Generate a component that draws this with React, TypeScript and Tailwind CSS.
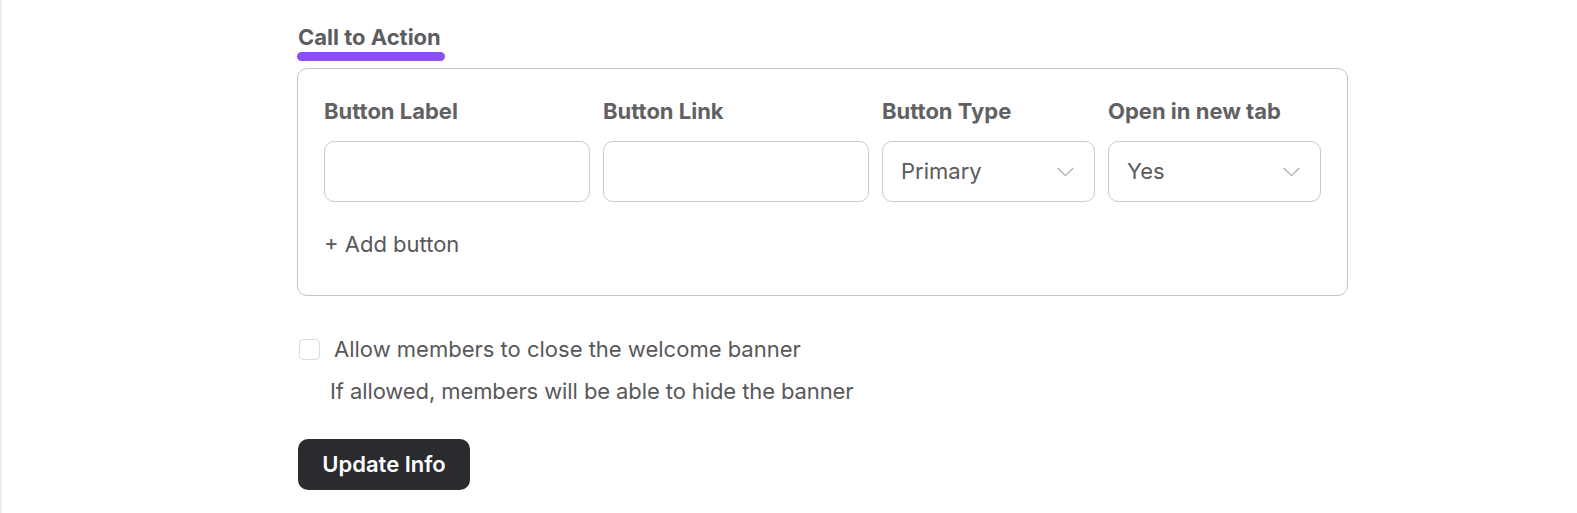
const FIELDS = [
  { label: "Button Label", kind: "input", width: "w-[266px]" },
  { label: "Button Link", kind: "input", width: "w-[266px]" },
  { label: "Button Type", kind: "select", width: "w-[213px]", value: "Primary" },
  { label: "Open in new tab", kind: "select", width: "w-[213px]", value: "Yes" },
];

function Chevron() {
  return (
    <svg width="17" height="10" viewBox="0 0 17 10" fill="none" className="text-[#acacae]">
      <path d="M1 1.2 L8.5 8.6 L16 1.2" stroke="currentColor" strokeWidth="1.2" strokeLinecap="round" strokeLinejoin="round" />
    </svg>
  );
}

export default function App() {
  return (
    <div className="min-h-[513px] bg-white border-l-2 border-[#ececec] pl-[295px] pt-[22px] font-['Inter','Liberation_Sans',sans-serif] text-[#5a5a5c]">
      <div className="inline-flex flex-col">
        <h2 className="text-[22px] leading-[30px] font-bold text-[#5d5d5f] pl-[1px]">Call to Action</h2>
        <div className="h-[9px] w-[148px] rounded-full bg-[#8c4ff6]" />
      </div>

      <div className="mt-[7px] w-[1051px] rounded-[10px] border border-[#c6c6c8] pl-[26px] pt-[27px] pb-[36px]">
        <div className="flex gap-[13px]">
          {FIELDS.map((f) => (
            <div key={f.label} className={`flex flex-col ${f.width}`}>
              <label className="text-[22px] leading-[30px] font-bold text-[#616163]">{f.label}</label>
              <div className="mt-[15px] h-[61px] rounded-[10px] border border-[#c9c9cb] flex items-center justify-between pl-[18px] pr-[20px]">
                {f.kind === "select" && (
                  <>
                    <span className="text-[22px] text-[#5a5a5c]">{f.value}</span>
                    <Chevron />
                  </>
                )}
              </div>
            </div>
          ))}
        </div>
        <button className="mt-[27px] text-[22px] leading-[30px] text-[#58585a]">+ Add button</button>
      </div>

      <div className="mt-[38px] flex items-center gap-[14px] pl-[2px]">
        <span className="w-[21px] h-[21px] rounded-[4px] border border-[#dcdcde] bg-white" />
        <span className="text-[22px] leading-[30px] text-[#58585a]">Allow members to close the welcome banner</span>
      </div>
      <p className="mt-[12px] pl-[33px] text-[22px] leading-[30px] tracking-[-0.1px] text-[#58585a]">
        If allowed, members will be able to hide the banner
      </p>

      <button className="mt-[33px] ml-[1px] h-[51px] w-[172px] rounded-[10px] bg-[#2a2b2f] text-white text-[22px] font-semibold">
        Update Info
      </button>
    </div>
  );
}
